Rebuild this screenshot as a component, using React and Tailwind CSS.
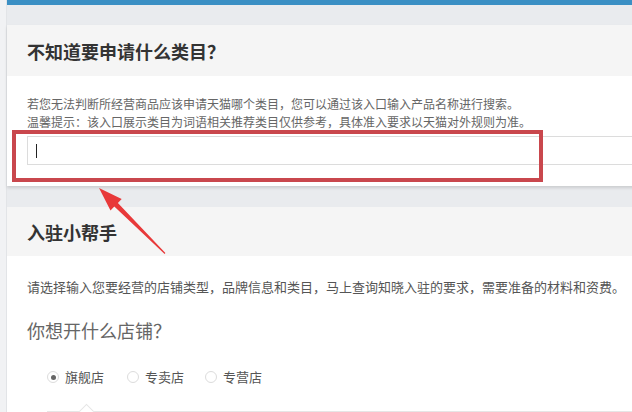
import React from 'react'

const cjk = { fontFamily: '"Noto Sans CJK SC", "Microsoft YaHei", sans-serif' }

function Radio({ label, checked }) {
  return (
    <label className="flex items-center gap-[6px]">
      <span className="flex h-[12px] w-[12px] items-center justify-center rounded-full border border-[#dcdcdc] bg-white">
        {checked && <span className="h-[5px] w-[5px] rounded-full bg-[#666]" />}
      </span>
      <span className="text-[13px] leading-[20px] text-[#555]">{label}</span>
    </label>
  )
}

export default function App() {
  return (
    <div className="relative flex h-[412px] w-[632px] overflow-hidden bg-[#e9ebee]" style={cjk}>
      <div className="w-[7px] shrink-0 border-r border-[#e2e4e7] bg-[#f1f2f4]" />

      <div className="w-[720px] shrink-0">
        <div className="h-[5px] bg-[#3a8fc4]" />

        <div className="mt-[20px] bg-white shadow-[0_2px_3px_rgba(0,0,0,0.13)]">
          <div className="flex h-[51px] items-center bg-[#f5f5f5] px-5">
            <h2 className="text-[18px] font-bold leading-[24px] text-[#333]">不知道要申请什么类目？</h2>
          </div>
          <div className="px-5 pb-[21px] pt-[19px]">
            <p className="text-[12px] leading-[18px] text-[#666]">
              若您无法判断所经营商品应该申请天猫哪个类目，您可以通过该入口输入产品名称进行搜索。
            </p>
            <p className="text-[12px] leading-[18px] text-[#666]">
              温馨提示：该入口展示类目为词语相关推荐类目仅供参考，具体准入要求以天猫对外规则为准。
            </p>
            <div className="mt-[5px] flex h-[29px] items-center border border-[#dcdcdc] bg-white pl-[8px]">
              <span className="h-[14px] w-px bg-[#222]" />
            </div>
          </div>
        </div>

        <div className="mt-[21px] bg-white">
          <div className="flex h-[49px] items-center bg-[#f5f5f5] px-5">
            <h2 className="text-[18px] font-bold leading-[24px] text-[#333]">入驻小帮手</h2>
          </div>
          <div className="px-5 pt-[21px]">
            <p className="text-[13px] leading-[20px] text-[#555]">
              请选择输入您要经营的店铺类型，品牌信息和类目，马上查询知晓入驻的要求，需要准备的材料和资费。
            </p>
            <h3 className="mt-[21px] text-[18px] font-normal leading-[24px] text-[#666]">你想开什么店铺？</h3>
            <div className="mt-[25px] flex items-center pl-[20px]">
              <Radio label="旗舰店" checked />
              <div className="ml-[23px]">
                <Radio label="专卖店" />
              </div>
              <div className="ml-[21px]">
                <Radio label="专营店" />
              </div>
            </div>
            <div className="relative ml-[20px] mt-[24px] h-[20px] border-t border-[#e6e6e6] bg-white">
              <span className="absolute left-[34px] top-[-6px] h-[11px] w-[11px] rotate-45 border-l border-t border-[#e6e6e6] bg-white" />
            </div>
          </div>
        </div>
      </div>

      <div className="pointer-events-none absolute left-[12px] top-[130px] h-[52px] w-[531px] border-4 border-[#c9474d]" />

      <svg className="pointer-events-none absolute left-0 top-0" width="632" height="412">
        <polygon
          points="99,188 121.7,199.1 117.9,203 165.4,253.1 164.6,253.9 114.3,206.6 110.5,210.5"
          fill="#e8393a"
        />
      </svg>
    </div>
  )
}
